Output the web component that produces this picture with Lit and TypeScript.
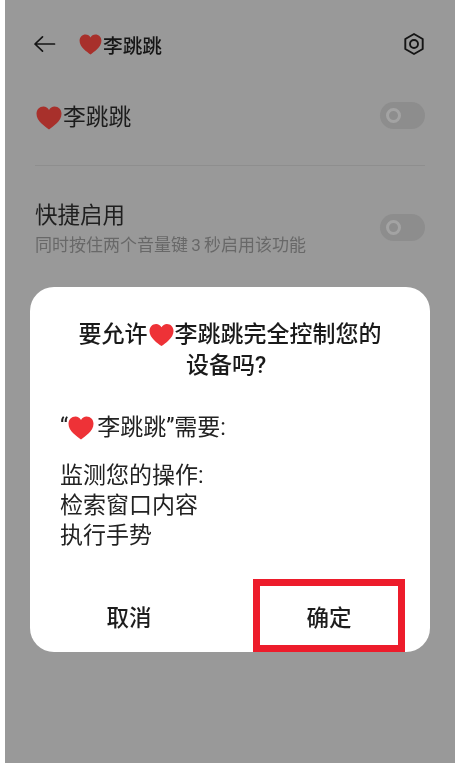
import { LitElement, html, css, svg } from "lit";
import { customElement } from "lit/decorators.js";

const heart = (cls: string) => html`<svg class="heart ${cls}" viewBox="0 0 26 24" aria-hidden="true">${svg`<path d="M13 23.5C9 20.4 0.5 15.2 0.5 7.8C0.5 3.4 3.6 0.5 7.4 0.5C9.8 0.5 11.9 1.8 13 3.9C14.1 1.8 16.2 0.5 18.6 0.5C22.4 0.5 25.5 3.4 25.5 7.8C25.5 15.2 17 20.4 13 23.5Z" fill="currentColor"/>`}</svg>`;

@customElement("app-root")
export class AppRoot extends LitElement {
  static styles = css`
    :host {
      display: block;
      width: 458px;
      height: 763px;
      background: #fff;
      font-family: Roboto, "Noto Sans CJK SC", sans-serif;
      overflow: hidden;
    }
    * { box-sizing: border-box; }
    .screen {
      position: relative;
      width: 450px;
      height: 763px;
      margin-left: 5px;
      background: #999;
      padding: 0 30px;
      filter: blur(0.35px);
    }
    .bar {
      height: 88px;
      display: flex;
      align-items: center;
      color: #151515;
    }
    .back { width: 23px; height: 18px; margin: 0 22px 0 -2px; flex: none; }
    .bar-title {
      display: flex;
      align-items: center;
      font-size: 19.7px;
      font-weight: 500;
      flex: 1;
    }
    .gear { width: 24px; height: 24px; flex: none; margin-right: -1px; }
    .heart { display: inline-block; flex: none; vertical-align: middle; }
    .dim { color: #a8302b; }
    .bright { color: #ee3237; }
    .h-bar { width: 23px; height: 21px; margin-right: 1px; margin-left: 1px; }
    .h-row { width: 26px; height: 24px; margin-left: 1px; margin-right: 1px; }
    .h-title { width: 25px; height: 24px; margin: 0 1px; }
    .h-need { width: 26px; height: 24px; margin: 0 3px 0 0; }
    .row {
      display: flex;
      align-items: center;
      justify-content: space-between;
      color: #1c1c1c;
    }
    .row-one {
      height: 85px;
      margin-top: -7px;
      border-bottom: 1px solid #8e8e8e;
    }
    .row-label {
      display: flex;
      align-items: center;
      font-size: 22.8px;
      line-height: 30px;
      margin-top: -11px;
    }
    .toggle-wrap { margin-top: -16px; }
    .row-two { height: 90px; padding-top: 34px; }
    .feat { font-size: 22.5px; line-height: 30px; color: #1f1f1f; }
    .sub { font-size: 17px; line-height: 22px; color: #686868; margin-top: 4px; white-space: nowrap; word-spacing: -1px; }
    .toggle {
      width: 45px;
      height: 27px;
      border-radius: 14px;
      background: #8d8d8d;
      display: flex;
      align-items: center;
      padding-left: 6px;
      flex: none;
    }
    .toggle i {
      display: block;
      width: 15px;
      height: 15px;
      border-radius: 50%;
      border: 3px solid #a3a3a3;
      background: #8d8d8d;
    }
    .two-toggle { margin-top: -2px; }
    .modal {
      position: absolute;
      left: 25px;
      top: 287px;
      width: 400px;
      height: 365px;
      background: #fff;
      border-radius: 24px;
      color: #1a1a1a;
      display: flex;
      flex-direction: column;
    }
    .title {
      margin: 32px 20px 0;
      font-size: 23px;
      line-height: 31px;
      font-weight: 500;
      text-align: center;
      color: #1a1a1a;
    }
    .title .line { display: flex; align-items: center; justify-content: center; white-space: nowrap; }
    .title .second { padding-right: 8px; }
    .body { margin: 32px 30px 0; font-size: 23px; line-height: 30px; color: #222; }
    .need { display: flex; align-items: center; white-space: nowrap; margin-bottom: 18px; }
    .actions { margin-top: auto; height: 73px; display: flex; position: relative; font-size: 22.5px; font-weight: 500; }
    .action { flex: 1; display: flex; align-items: center; justify-content: center; background: none; border: 0; font: inherit; color: #1d1d1d; }
    .action.left { flex: 0 0 198px; }
    .action.right { flex: 0 0 202px; }
    .mark {
      position: absolute;
      left: 223px;
      top: 0;
      width: 152px;
      height: 73px;
      border: 7px solid #ed1c2b;
      pointer-events: none;
    }
  `;

  render() {
    return html`
      <div class="screen">
        <div class="bar">
          <svg class="back" viewBox="0 0 23 18" fill="none" stroke="currentColor" stroke-width="1.7" stroke-linecap="round" stroke-linejoin="round">
            <path d="M21.5 9H2M9.5 1.8L2 9L9.5 16.2"/>
          </svg>
          <div class="bar-title">${heart("dim h-bar")}李跳跳</div>
          <svg class="gear" viewBox="0 0 24 24" fill="none" stroke="currentColor" stroke-width="1.9" stroke-linejoin="round">
            <path d="M12 2L20.7 7V17L12 22L3.3 17V7Z"/>
            <circle cx="12" cy="12" r="4"/>
          </svg>
        </div>
        <div class="row row-one">
          <div class="row-label">${heart("dim h-row")}李跳跳</div>
          <div class="toggle toggle-wrap"><i></i></div>
        </div>
        <div class="row row-two">
          <div>
            <div class="feat">快捷启用</div>
            <div class="sub">同时按住两个音量键 3 秒启用该功能</div>
          </div>
          <div class="toggle two-toggle"><i></i></div>
        </div>
        <div class="modal">
          <div class="title">
            <div class="line">要允许${heart("bright h-title")}李跳跳完全控制您的</div>
            <div class="line second">设备吗?</div>
          </div>
          <div class="body">
            <div class="need">“${heart("bright h-need")}李跳跳”需要:</div>
            <div>监测您的操作:</div>
            <div>检索窗口内容</div>
            <div>执行手势</div>
          </div>
          <div class="actions">
            <button class="action left">取消</button>
            <button class="action right">确定</button>
            <div class="mark"></div>
          </div>
        </div>
      </div>
    `;
  }
}
